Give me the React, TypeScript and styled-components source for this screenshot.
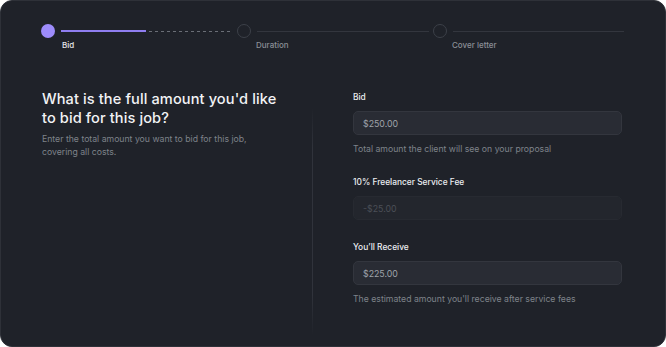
import styled, { createGlobalStyle } from 'styled-components';

const GlobalStyle = createGlobalStyle`
  html, body {
    margin: 0;
    padding: 0;
    background: #ffffff;
  }
  * {
    box-sizing: border-box;
  }
`;

const Card = styled.div`
  width: 666px;
  height: 347px;
  background: #1f2229;
  border: 1px solid #2e3138;
  border-radius: 12px;
  overflow: hidden;
  font-family: Inter, 'Noto Sans', sans-serif;
  display: flex;
  flex-direction: column;
`;

const Stepper = styled.div`
  display: grid;
  grid-template-columns: 196px 196px 195px;
  padding: 23px 0 0 40px;
`;

const Step = styled.div`
  display: flex;
  flex-direction: column;
`;

const StepTrack = styled.div`
  display: flex;
  align-items: center;
  height: 14px;
`;

const Dot = styled.div<{ $active?: boolean }>`
  width: 14px;
  height: 14px;
  flex: none;
  border-radius: 50%;
  background: ${(p) => (p.$active ? '#9d8cfb' : 'transparent')};
  border: ${(p) => (p.$active ? 'none' : '1px solid #3c4048')};
`;

const Line = styled.div`
  flex: 1;
  display: flex;
  margin: 0 4px 0 6px;
  height: 2px;
  align-items: center;
`;

const Solid = styled.div<{ $color: string; $thick?: number }>`
  flex: 1;
  height: ${(p) => p.$thick ?? 1}px;
  background: ${(p) => p.$color};
`;

const Dashed = styled.div`
  flex: 1;
  height: 1px;
  margin-left: 3px;
  background: repeating-linear-gradient(
    to right,
    #6a6e76 0 3px,
    transparent 3px 6px
  );
`;

const StepLabel = styled.span<{ $active?: boolean }>`
  margin: 2px 0 0 ${(p) => (p.$active ? 21 : 19)}px;
  font-size: 8px;
  line-height: 11px;
  font-weight: 500;
  color: ${(p) => (p.$active ? '#e6e7ea' : '#8b8f97')};
`;

const Main = styled.div`
  flex: 1;
  display: grid;
  grid-template-columns: 311px 1px 1fr;
  margin-top: 36px;
`;

const Intro = styled.div`
  padding: 3px 0 0 41px;
`;

const Heading = styled.h1`
  margin: 0;
  width: 240px;
  font-size: 14.6px;
  line-height: 19px;
  font-weight: 500;
  color: #f2f3f5;
  letter-spacing: 0.1px;
`;

const Sub = styled.p`
  margin: 5px 0 0;
  font-size: 8.7px;
  line-height: 12.5px;
  color: #7e828a;
  width: 215px;
`;

const Divider = styled.div`
  margin: 20px 0 10px;
  background: linear-gradient(
    to bottom,
    transparent 0%,
    #30333b 18%,
    #30333b 82%,
    transparent 100%
  );
`;

const Form = styled.div`
  padding: 4px 43px 0 40px;
  display: flex;
  flex-direction: column;
`;

const Field = styled.div`
  display: flex;
  flex-direction: column;
  margin-bottom: 21px;
`;

const Label = styled.label`
  font-size: 8.4px;
  font-weight: 500;
  color: #eceef1;
  line-height: 12px;
`;

const Input = styled.div<{ $disabled?: boolean }>`
  margin-top: 8px;
  height: 24px;
  border-radius: 5px;
  border: 1px solid ${(p) => (p.$disabled ? '#272a31' : '#33363e')};
  background: ${(p) => (p.$disabled ? '#23262d' : '#292c34')};
  color: ${(p) => (p.$disabled ? '#4b4f57' : '#9fa3aa')};
  font-size: 8.8px;
  display: flex;
  align-items: center;
  padding-left: 9px;
`;

const Help = styled.span`
  margin-top: 8px;
  font-size: 8.7px;
  line-height: 12px;
  color: #7e828a;
`;

const steps = [
  { label: 'Bid', active: true },
  { label: 'Duration' },
  { label: 'Cover letter' },
];

export default function App() {
  return (
    <>
      <GlobalStyle />
      <Card>
        <Stepper>
          {steps.map((s, i) => (
            <Step key={s.label}>
              <StepTrack>
                <Dot $active={s.active} />
                <Line>
                  {i === 0 ? (
                    <>
                      <Solid $color="#8f7ef0" $thick={2} />
                      <Dashed />
                    </>
                  ) : (
                    <Solid $color="#33363e" />
                  )}
                </Line>
              </StepTrack>
              <StepLabel $active={s.active}>{s.label}</StepLabel>
            </Step>
          ))}
        </Stepper>
        <Main>
          <Intro>
            <Heading>What is the full amount you'd like to bid for this job?</Heading>
            <Sub>Enter the total amount you want to bid for this job, covering all costs.</Sub>
          </Intro>
          <Divider />
          <Form>
            <Field>
              <Label>Bid</Label>
              <Input>$250.00</Input>
              <Help>Total amount the client will see on your proposal</Help>
            </Field>
            <Field>
              <Label>10% Freelancer Service Fee</Label>
              <Input $disabled>-$25.00</Input>
            </Field>
            <Field>
              <Label>You’ll Receive</Label>
              <Input>$225.00</Input>
              <Help>The estimated amount you'll receive after service fees</Help>
            </Field>
          </Form>
        </Main>
      </Card>
    </>
  );
}
